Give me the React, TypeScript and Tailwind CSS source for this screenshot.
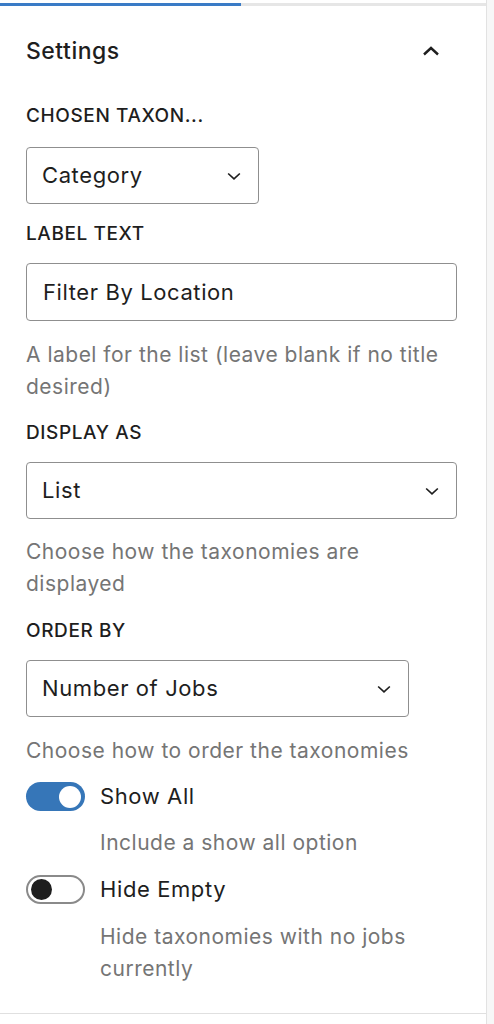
import React from "react";

const Chevron: React.FC<{ up?: boolean; className?: string }> = ({ up, className }) => (
  <svg viewBox="0 0 24 24" className={className} fill="none">
    <path
      d={up ? "M5 15.5l7-6.5 7 6.5" : "M5 9l7 6.5L19 9"}
      stroke="#1e1e1e"
      strokeWidth={up ? 2.4 : 2}
    />
  </svg>
);

const Label: React.FC<{ children: React.ReactNode; className?: string }> = ({ children, className = "" }) => (
  <div className={`text-[19px] leading-[24px] tracking-[0.6px] font-medium uppercase text-[#1e1e1e] ${className}`}>
    {children}
  </div>
);

const Help: React.FC<{ children: React.ReactNode; className?: string }> = ({ children, className = "" }) => (
  <p className={`text-[21px] leading-[32px] tracking-[0.5px] text-[#757575] ${className}`}>{children}</p>
);

const Select: React.FC<{ value: string; width: string; className?: string }> = ({ value, width, className = "" }) => (
  <div
    className={`flex items-center justify-between h-[57px] border border-[#8f8f8f] rounded-[4px] pl-[15px] pr-[14px] bg-white ${width} ${className}`}
  >
    <span className="text-[22px] tracking-[0.6px] text-[#1e1e1e]">{value}</span>
    <Chevron className="w-[20px] h-[20px]" />
  </div>
);

const Toggle: React.FC<{ on?: boolean; label: string }> = ({ on, label }) => (
  <div className="flex items-center h-[29px]">
    {on ? (
      <div className="w-[59px] h-[29px] rounded-full bg-[#3676b8] flex items-center justify-end pr-[4px]">
        <div className="w-[22px] h-[22px] rounded-full bg-white" />
      </div>
    ) : (
      <div className="w-[59px] h-[29px] rounded-full border-2 border-[#8a8a8a] bg-white flex items-center pl-[3px]">
        <div className="w-[21px] h-[21px] rounded-full bg-[#1e1e1e]" />
      </div>
    )}
    <span className="ml-[15px] text-[22px] tracking-[0.6px] text-[#1e1e1e]">{label}</span>
  </div>
);

export default function App() {
  return (
    <div
      className="w-[494px] h-[1024px] bg-[#f7f7f7] flex"
      style={{ fontFamily: "Inter, 'Noto Sans', sans-serif" }}
    >
      <div className="w-[487px] bg-white border-r border-[#e2e2e2] flex flex-col">
        <div className="flex pt-[3px] h-[6px] box-content">
          <div className="w-[241px] h-[3px] bg-[#3a7bc6]" />
          <div className="flex-1 h-[3px] bg-[#e6e6e6]" />
        </div>

        <div className="border-b border-[#e0e0e0] pl-[26px] pr-[43px] pb-[28px]">
          <div className="flex items-center justify-between mt-[28px] h-[28px]">
            <h2 className="text-[23px] tracking-[0.5px] font-medium text-[#1e1e1e]">Settings</h2>
            <Chevron up className="w-[24px] h-[24px]" />
          </div>

          <Label className="mt-[39px]">Chosen Taxon...</Label>
          <Select value="Category" width="w-[233px]" className="mt-[19px]" />

          <Label className="mt-[18px]">Label Text</Label>
          <div className="mt-[17px] w-[431px] h-[58px] border border-[#8f8f8f] rounded-[4px] flex items-center pl-[16px]">
            <span className="text-[22px] tracking-[0.6px] text-[#1e1e1e]">Filter By Location</span>
          </div>
          <Help className="mt-[18px]">A label for the list (leave blank if no title desired)</Help>

          <Label className="mt-[18px]">Display As</Label>
          <Select value="List" width="w-[431px]" className="mt-[17px]" />
          <Help className="mt-[17px] pr-[70px]">Choose how the taxonomies are displayed</Help>

          <Label className="mt-[19px]">Order By</Label>
          <Select value="Number of Jobs" width="w-[383px]" className="mt-[17px]" />
          <Help className="mt-[18px]">Choose how to order the taxonomies</Help>

          <div className="mt-[15px]">
            <Toggle on label="Show All" />
          </div>
          <Help className="mt-[16px] pl-[74px]">Include a show all option</Help>

          <div className="mt-[16px]">
            <Toggle label="Hide Empty" />
          </div>
          <Help className="mt-[17px] pl-[74px] pr-[30px]">Hide taxonomies with no jobs currently</Help>
        </div>
      </div>
    </div>
  );
}
